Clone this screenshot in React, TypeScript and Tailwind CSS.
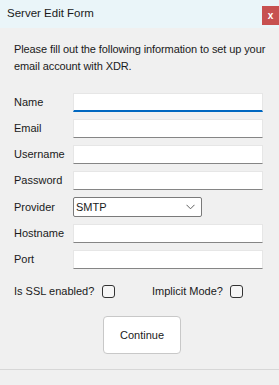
import React from "react";

const font = { fontFamily: '"Liberation Sans", Arial, sans-serif' };

function TextRow({ label, focused }: { label: string; focused?: boolean }) {
  return (
    <div className="flex items-center h-[19px]">
      <div className="w-[59px] text-[11px] text-[#1a1a1a] leading-none">{label}</div>
      <div
        className={
          "flex-1 h-[19px] bg-white border border-[#e6e6e6] " +
          (focused ? "border-b-2 border-b-[#0067c0]" : "border-b-[#858585]")
        }
      />
    </div>
  );
}

export default function App() {
  return (
    <div className="w-[279px] h-[385px] bg-[#f0f0f0] flex flex-col" style={font}>
      <div className="h-[28px] bg-[#eaf5f9] flex items-start justify-between shrink-0">
        <div className="pl-[7px] pt-[8px] text-[11.5px] text-[#1a1a1a] leading-none">Server Edit Form</div>
        <div className="mt-[6px] w-[17px] h-[19px] bg-[#c75050] flex items-center justify-center text-white text-[10px] font-bold leading-none">
          x
        </div>
      </div>
      <div className="pl-[14px] pr-[4px] pt-[13px] text-[11px] leading-[17px] text-[#1a1a1a] whitespace-nowrap tracking-[-0.1px]">
        Please fill out the following information to set up your
        <br />
        email account with XDR.
      </div>
      <div className="pl-[14px] pr-[16px] mt-[18px] flex flex-col gap-[7px]">
        <TextRow label="Name" focused />
        <TextRow label="Email" />
        <TextRow label="Username" />
        <TextRow label="Password" />
        <div className="flex items-center h-[20px]">
          <div className="w-[59px] text-[11px] text-[#1a1a1a] leading-none">Provider</div>
          <div className="w-[129px] h-[20px] bg-white border border-[#7a7a7a] rounded-[2px] flex items-center justify-between pl-[2px] pr-[6px]">
            <span className="text-[11px] leading-none text-[#1a1a1a]">SMTP</span>
            <svg width="9" height="6" viewBox="0 0 9 6" fill="none">
              <path d="M0.5 0.8 L4.5 4.8 L8.5 0.8" stroke="#606060" strokeWidth="1" />
            </svg>
          </div>
        </div>
        <TextRow label="Hostname" />
        <TextRow label="Port" />
      </div>
      <div className="pl-[14px] mt-[16px] flex items-center h-[13px] text-[11px] text-[#1a1a1a] leading-none">
        <span className="w-[88px]">Is SSL enabled?</span>
        <div className="w-[13px] h-[13px] border border-[#333] rounded-[3px] bg-[#f6f6f6]" />
        <span className="ml-[37px] w-[78px]">Implicit Mode?</span>
        <div className="w-[13px] h-[13px] border border-[#333] rounded-[3px] bg-[#f6f6f6]" />
      </div>
      <div className="flex justify-center mt-[18px] pl-[5px]">
        <button className="w-[78px] h-[38px] bg-white border border-[#c8c8c8] rounded-[4px] text-[11px] text-[#1a1a1a]">
          Continue
        </button>
      </div>
      <div className="mt-[15px] h-px bg-[#d7d7d7]" />
      <div className="flex-1" />
    </div>
  );
}
